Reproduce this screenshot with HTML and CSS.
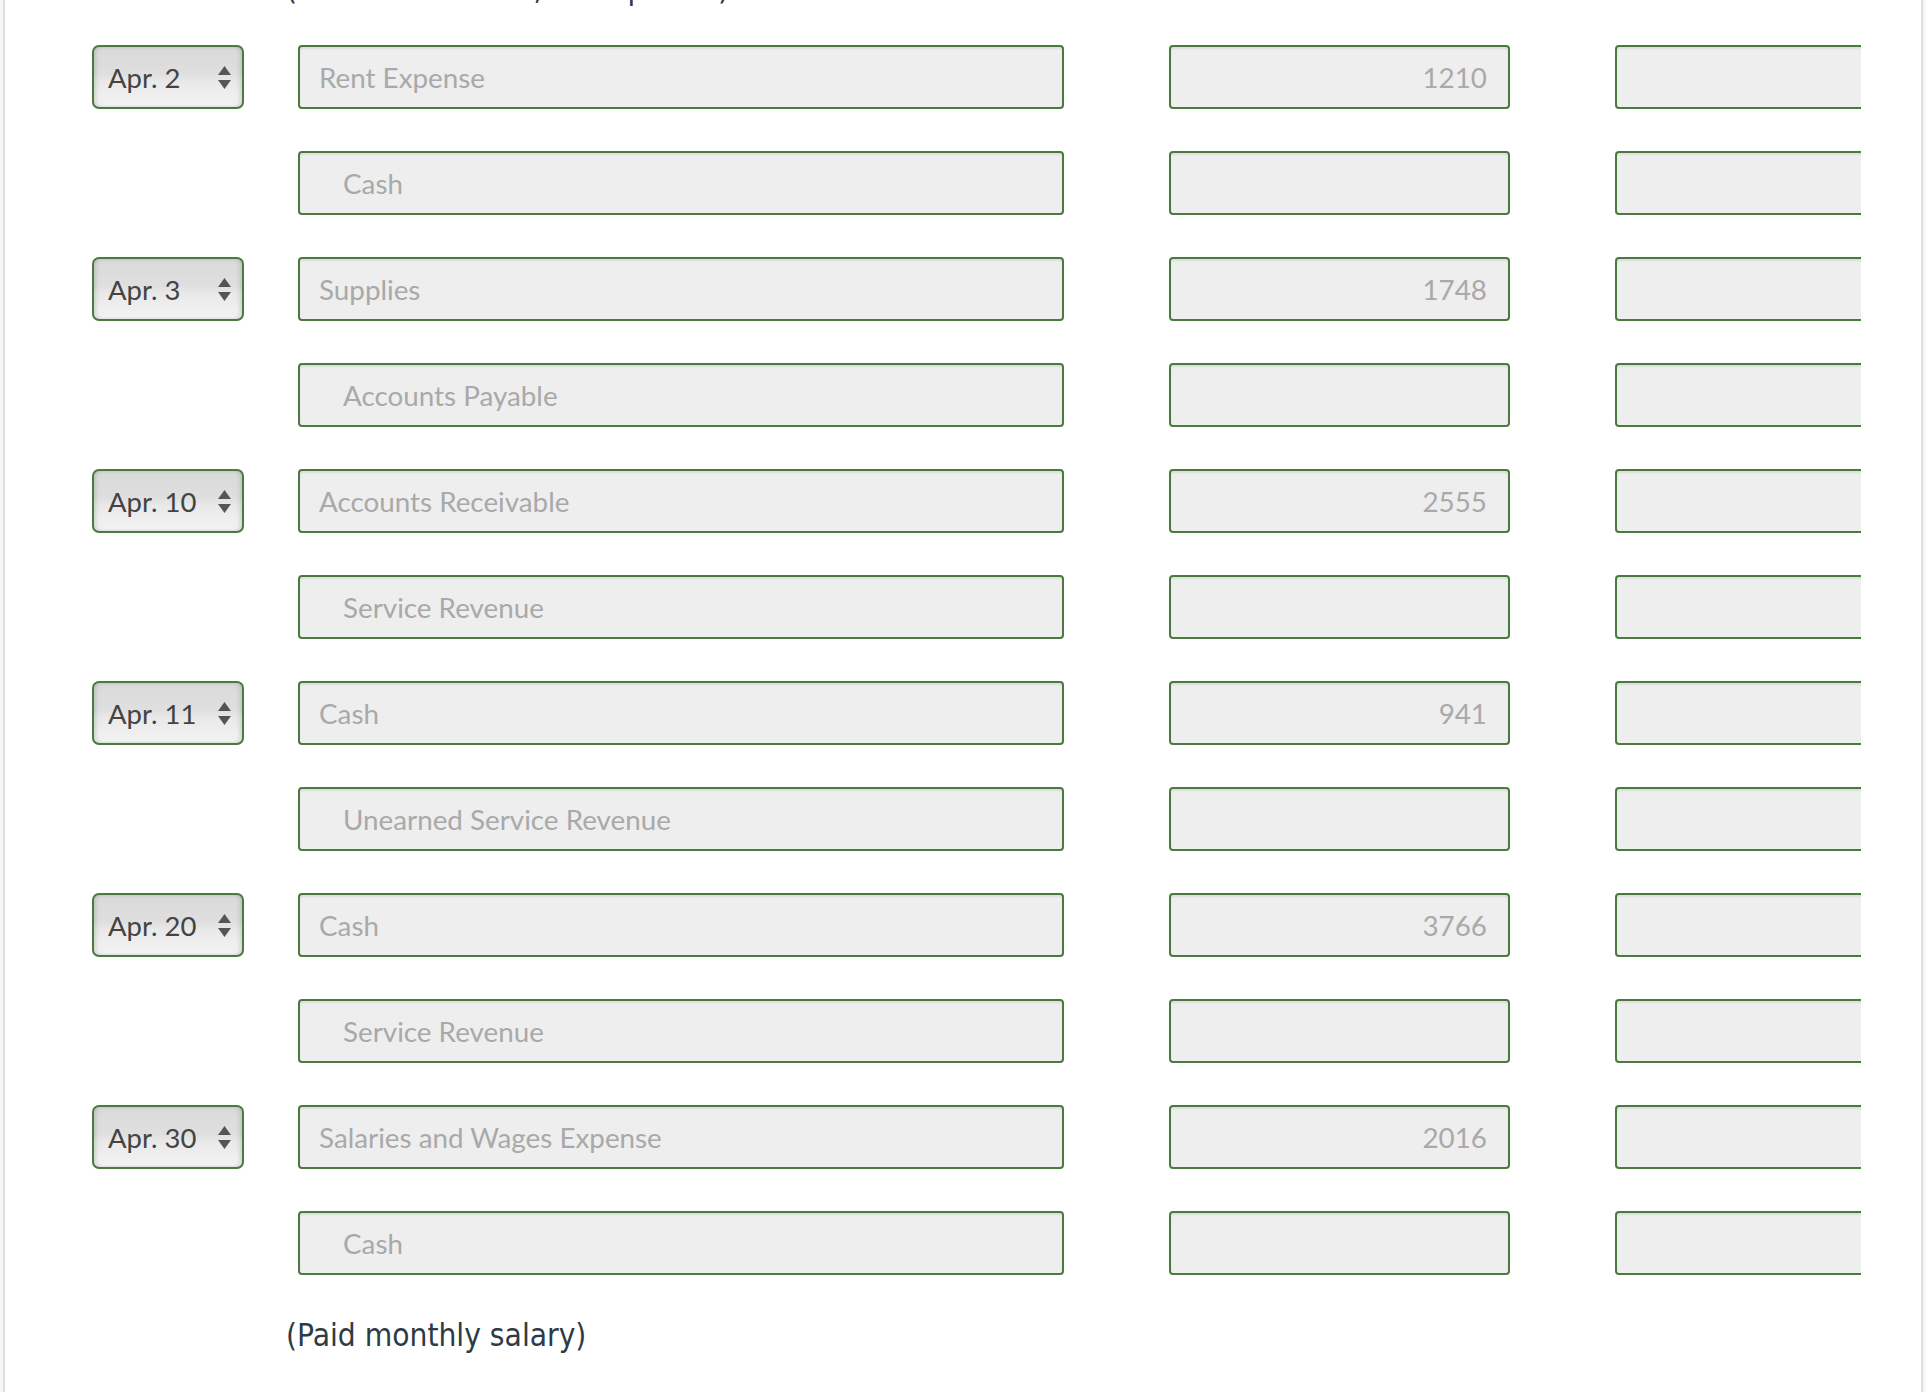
FILE: index.html
```html
<!DOCTYPE html>
<html lang="en">
<head>
<meta charset="utf-8">
<title>Journal entries</title>
<link rel="stylesheet" href="styles.css">
</head>
<body>
<div class="page">
  <p class="note note-top">(Started business, a shop here)</p>
  <div class="journal">
    <div class="cell"><div class="date"><span>Apr. 2</span><svg class="arrows" viewBox="0 0 13 23" width="13" height="23"><polygon points="0,9 6.5,0 13,9"/><polygon points="0,14 13,14 6.5,23"/></svg></div></div>
    <div class="cell"><div class="field acct">Rent Expense</div></div>
    <div class="cell"><div class="field num">1210</div></div>
    <div class="cell clip"><div class="field num"></div></div>

    <div class="cell"></div>
    <div class="cell"><div class="field acct credit">Cash</div></div>
    <div class="cell"><div class="field num"></div></div>
    <div class="cell clip"><div class="field num"></div></div>

    <div class="cell"><div class="date"><span>Apr. 3</span><svg class="arrows" viewBox="0 0 13 23" width="13" height="23"><polygon points="0,9 6.5,0 13,9"/><polygon points="0,14 13,14 6.5,23"/></svg></div></div>
    <div class="cell"><div class="field acct">Supplies</div></div>
    <div class="cell"><div class="field num">1748</div></div>
    <div class="cell clip"><div class="field num"></div></div>

    <div class="cell"></div>
    <div class="cell"><div class="field acct credit">Accounts Payable</div></div>
    <div class="cell"><div class="field num"></div></div>
    <div class="cell clip"><div class="field num"></div></div>

    <div class="cell"><div class="date"><span>Apr. 10</span><svg class="arrows" viewBox="0 0 13 23" width="13" height="23"><polygon points="0,9 6.5,0 13,9"/><polygon points="0,14 13,14 6.5,23"/></svg></div></div>
    <div class="cell"><div class="field acct">Accounts Receivable</div></div>
    <div class="cell"><div class="field num">2555</div></div>
    <div class="cell clip"><div class="field num"></div></div>

    <div class="cell"></div>
    <div class="cell"><div class="field acct credit">Service Revenue</div></div>
    <div class="cell"><div class="field num"></div></div>
    <div class="cell clip"><div class="field num"></div></div>

    <div class="cell"><div class="date"><span>Apr. 11</span><svg class="arrows" viewBox="0 0 13 23" width="13" height="23"><polygon points="0,9 6.5,0 13,9"/><polygon points="0,14 13,14 6.5,23"/></svg></div></div>
    <div class="cell"><div class="field acct">Cash</div></div>
    <div class="cell"><div class="field num">941</div></div>
    <div class="cell clip"><div class="field num"></div></div>

    <div class="cell"></div>
    <div class="cell"><div class="field acct credit">Unearned Service Revenue</div></div>
    <div class="cell"><div class="field num"></div></div>
    <div class="cell clip"><div class="field num"></div></div>

    <div class="cell"><div class="date"><span>Apr. 20</span><svg class="arrows" viewBox="0 0 13 23" width="13" height="23"><polygon points="0,9 6.5,0 13,9"/><polygon points="0,14 13,14 6.5,23"/></svg></div></div>
    <div class="cell"><div class="field acct">Cash</div></div>
    <div class="cell"><div class="field num">3766</div></div>
    <div class="cell clip"><div class="field num"></div></div>

    <div class="cell"></div>
    <div class="cell"><div class="field acct credit">Service Revenue</div></div>
    <div class="cell"><div class="field num"></div></div>
    <div class="cell clip"><div class="field num"></div></div>

    <div class="cell"><div class="date"><span>Apr. 30</span><svg class="arrows" viewBox="0 0 13 23" width="13" height="23"><polygon points="0,9 6.5,0 13,9"/><polygon points="0,14 13,14 6.5,23"/></svg></div></div>
    <div class="cell"><div class="field acct">Salaries and Wages Expense</div></div>
    <div class="cell"><div class="field num">2016</div></div>
    <div class="cell clip"><div class="field num"></div></div>

    <div class="cell"></div>
    <div class="cell"><div class="field acct credit">Cash</div></div>
    <div class="cell"><div class="field num"></div></div>
    <div class="cell clip"><div class="field num"></div></div>
  </div>
  <p class="note note-bottom">(Paid monthly salary)</p>
</div>
</body>
</html>
```
FILE: styles.css
```css
html, body {
  margin: 0;
  padding: 0;
  background: #f6f6f6;
}

.page {
  display: flow-root;
  margin: 0 3px;
  min-height: 1392px;
  background: #ffffff;
  border-left: 2px solid #dedede;
  border-right: 2px solid #dedede;
}

.note {
  margin: 0;
  font-family: "DejaVu Sans", "Liberation Sans", sans-serif;
  font-stretch: condensed;
  font-size: 31.4px;
  line-height: 40px;
  height: 40px;
  color: #2d3b45;
  padding-left: 281px;
  white-space: nowrap;
}

.note-top {
  margin-top: -32px;
}

.journal {
  display: grid;
  grid-template-columns: 206px 871px 446px 246px;
  grid-auto-rows: 64px;
  row-gap: 42px;
  margin-top: 37px;
  padding-left: 87px;
}

.cell {
  display: flex;
  min-width: 0;
}

.clip {
  overflow: hidden;
}

.date {
  box-sizing: border-box;
  width: 152px;
  height: 64px;
  display: flex;
  align-items: center;
  justify-content: space-between;
  padding: 0 11px 0 14px;
  border: 2px solid #4b7a3e;
  border-radius: 7px;
  background: linear-gradient(to bottom, #d9d9d9 0%, #dfdfdf 45%, #e9e9e9 58%, #f3f3f3 100%);
  box-shadow: inset 3px 0 4px -1px rgba(0, 0, 0, 0.13), inset -3px 0 4px -1px rgba(0, 0, 0, 0.13);
  font-family: Lato, "Liberation Sans", sans-serif;
  font-size: 27.5px;
  color: #444444;
}

.arrows {
  display: block;
  fill: #555555;
}

.field {
  box-sizing: border-box;
  height: 64px;
  border: 2px solid #4b7a3e;
  border-radius: 4px;
  background: #eeeeee;
  box-shadow: inset 0 2px 2px rgba(0, 0, 0, 0.07);
  font-family: Lato, "Liberation Sans", sans-serif;
  font-size: 27.8px;
  color: #a9a9a9;
  display: flex;
  align-items: center;
  white-space: nowrap;
}

.acct {
  width: 766px;
  padding-left: 19px;
}

.acct.credit {
  padding-left: 43px;
}

.num {
  width: 341px;
  flex-shrink: 0;
  justify-content: flex-end;
  padding-right: 21px;
}

.note-bottom {
  margin-top: 40px;
}
```
